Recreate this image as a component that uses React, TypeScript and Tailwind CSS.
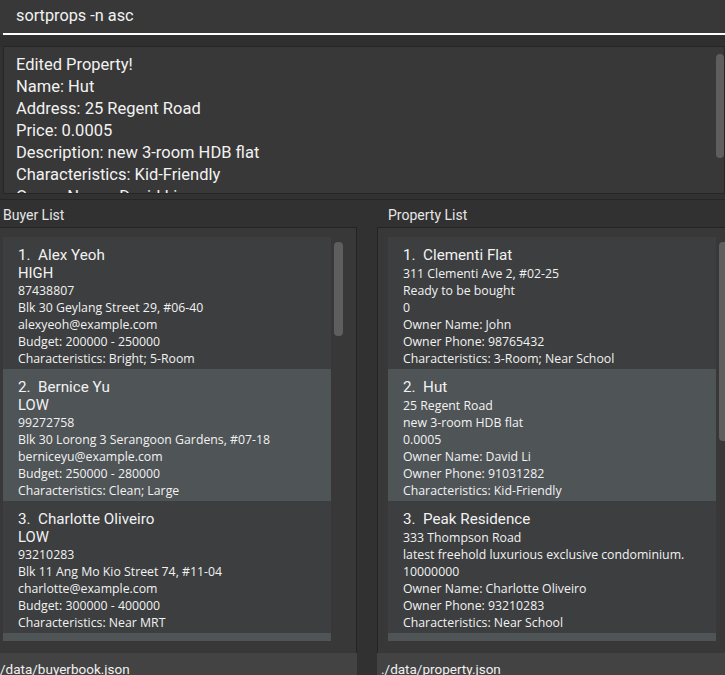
const buyers = [
  {
    name: "Alex Yeoh",
    priority: "HIGH",
    lines: [
      "87438807",
      "Blk 30 Geylang Street 29, #06-40",
      "alexyeoh@example.com",
      "Budget: 200000 - 250000",
      "Characteristics: Bright; 5-Room",
    ],
  },
  {
    name: "Bernice Yu",
    priority: "LOW",
    lines: [
      "99272758",
      "Blk 30 Lorong 3 Serangoon Gardens, #07-18",
      "berniceyu@example.com",
      "Budget: 250000 - 280000",
      "Characteristics: Clean; Large",
    ],
  },
  {
    name: "Charlotte Oliveiro",
    priority: "LOW",
    lines: [
      "93210283",
      "Blk 11 Ang Mo Kio Street 74, #11-04",
      "charlotte@example.com",
      "Budget: 300000 - 400000",
      "Characteristics: Near MRT",
    ],
  },
];

const properties = [
  {
    name: "Clementi Flat",
    lines: [
      "311 Clementi Ave 2, #02-25",
      "Ready to be bought",
      "0",
      "Owner Name: John",
      "Owner Phone: 98765432",
      "Characteristics: 3-Room; Near School",
    ],
  },
  {
    name: "Hut",
    lines: [
      "25 Regent Road",
      "new 3-room HDB flat",
      "0.0005",
      "Owner Name: David Li",
      "Owner Phone: 91031282",
      "Characteristics: Kid-Friendly",
    ],
  },
  {
    name: "Peak Residence",
    lines: [
      "333 Thompson Road",
      "latest freehold luxurious exclusive condominium.",
      "10000000",
      "Owner Name: Charlotte Oliveiro",
      "Owner Phone: 93210283",
      "Characteristics: Near School",
    ],
  },
];

const resultLines = [
  "Edited Property!",
  "Name: Hut",
  "Address: 25 Regent Road",
  "Price: 0.0005",
  "Description: new 3-room HDB flat",
  "Characteristics: Kid-Friendly",
  "Owner Name: David Li",
];

type CardProps = {
  index: number;
  name: string;
  tag?: string;
  lines: string[];
};

const Card = ({ index, name, tag, lines }: CardProps) => {
  const odd = index % 2 === 1;
  return (
    <div
      className={`h-[132px] shrink-0 pl-[15px] pt-[8px] overflow-hidden ${odd ? "bg-[#4f5457]" : "bg-[#3c3e3f]"}`}
    >
      <div className="h-[20px] text-[15.2px] leading-[20px] font-['Roboto',sans-serif] whitespace-pre">
        {`${index + 1}.  ${name}`}
      </div>
      {tag && (
        <div className="h-[17px] text-[14.8px] leading-[17px] font-['Roboto',sans-serif]">{tag}</div>
      )}
      {lines.map((line, i) => (
        <div key={i} className="h-[17px] text-[12.3px] leading-[17px] font-['Open_Sans',sans-serif] whitespace-nowrap">
          {line}
        </div>
      ))}
    </div>
  );
};

const App = () => {
  return (
    <div className="w-[725px] h-[675px] overflow-hidden bg-[#313131] text-[#f2f2f2] flex flex-col font-['Roboto',sans-serif]">
      {/* command box */}
      <div className="h-[35px] shrink-0 bg-[#383838]">
        <div className="ml-[3px] h-[35px] border-b-2 border-white pl-[13px] flex items-center text-[16.3px] pb-[1px]">
          sortprops -n asc
        </div>
      </div>

      {/* result display */}
      <div className="h-[11px] shrink-0 bg-[#2f2f2f]" />
      <div className="ml-[3px] h-[148px] shrink-0 border border-[#262626] bg-[#383838] relative overflow-hidden">
        <div className="pl-[12px] pt-[7px]">
          {resultLines.map((l, i) => (
            <div key={i} className="h-[22px] leading-[22px] text-[16.5px] whitespace-nowrap">
              {l}
            </div>
          ))}
        </div>
        <div className="absolute left-[712px] top-[7px] w-[8px] h-[104px] rounded-[4px] bg-[#5e5e5e]" />
      </div>
      <div className="h-[6px] shrink-0 border-b border-[#262626]" />

      {/* lists */}
      <div className="flex flex-1 min-h-0">
        {/* buyer column */}
        <div className="w-[357px] shrink-0 flex flex-col">
          <div className="h-[27px] shrink-0 pl-[3px] pt-[4px] flex items-center text-[14px] text-[#e6e6e6]">Buyer List</div>
          <div className="flex-1 min-h-0 border-t border-r border-[#242424] bg-[#383838] flex pl-[3px] pt-[9px] overflow-hidden">
            <div className="w-[328px] flex flex-col">
              {buyers.map((b, i) => (
                <Card key={i} index={i} name={b.name} tag={b.priority} lines={b.lines} />
              ))}
              <div className="h-[8px] shrink-0 bg-[#4f5457]" />
            </div>
            <div className="ml-[3px] mt-[5px] w-[9px] h-[94px] rounded-[4px] bg-[#5e5e5e]" />
          </div>
          <div className="h-[22px] shrink-0 bg-[#434343] text-[13.5px] leading-[32px] overflow-hidden whitespace-nowrap">
            /data/buyerbook.json
          </div>
        </div>

        <div className="w-[20px] shrink-0" />

        {/* property column */}
        <div className="flex-1 flex flex-col">
          <div className="h-[27px] shrink-0 pl-[11px] pt-[4px] flex items-center text-[14px] text-[#e6e6e6]">Property List</div>
          <div className="flex-1 min-h-0 border-t border-l border-[#242424] bg-[#383838] flex pl-[10px] pt-[9px] overflow-hidden">
            <div className="w-[328px] shrink-0 flex flex-col">
              {properties.map((p, i) => (
                <Card key={i} index={i} name={p.name} lines={p.lines} />
              ))}
              <div className="h-[8px] shrink-0 bg-[#4f5457]" />
            </div>
            <div className="ml-[3px] mt-[5px] w-[9px] h-[199px] rounded-[4px] bg-[#5e5e5e] shrink-0" />
          </div>
          <div className="h-[22px] shrink-0 bg-[#434343] pl-[4px] text-[13.5px] leading-[32px] overflow-hidden whitespace-nowrap">
            ./data/property.json
          </div>
        </div>
      </div>
    </div>
  );
};

export default App;
